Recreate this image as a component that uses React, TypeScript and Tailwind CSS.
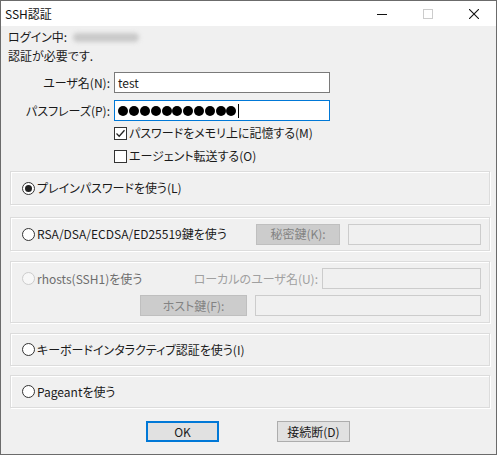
import React from 'react'

const Radio = ({ checked, disabled }: { checked?: boolean; disabled?: boolean }) => (
  <span
    className={`w-[13px] h-[13px] rounded-full border flex items-center justify-center shrink-0 ${
      disabled ? 'border-[#cccccc] bg-[#f7f7f7]' : 'border-[#333333] bg-white'
    }`}
  >
    {checked && <span className="w-[7px] h-[7px] rounded-full bg-[#222222]" />}
  </span>
)

const Check = ({ checked }: { checked?: boolean }) => (
  <span className="w-[13px] h-[13px] border border-[#333333] bg-white flex items-center justify-center shrink-0">
    {checked && (
      <svg width="11" height="11" viewBox="0 0 11 11">
        <path d="M1.5 5.5 L4.2 8.2 L9.5 2.2" fill="none" stroke="#222" strokeWidth="1.3" />
      </svg>
    )}
  </span>
)

const Group = ({ className, children }: { className: string; children: React.ReactNode }) => (
  <div
    className={`ml-[9px] mr-[6px] border border-[#dcdcdc] shadow-[inset_1px_1px_0_#ffffff,1px_1px_0_#ffffff] ${className}`}
  >
    {children}
  </div>
)

const DisabledButton = ({ className, label }: { className: string; label: string }) => (
  <div
    className={`h-[21px] bg-[#cccccc] border border-[#bfbfbf] text-[#838383] flex items-center justify-center shrink-0 ${className}`}
  >
    {label}
  </div>
)

const DisabledInput = ({ className }: { className: string }) => (
  <div className={`h-[21px] bg-[#f0f0f0] border border-[#cccccc] shrink-0 ${className}`} />
)

export default function App() {
  const dots = Array.from({ length: 11 })

  return (
    <div className="w-[497px] h-[455px] bg-[#f0f0f0] border border-[#6b6b6b] flex flex-col overflow-hidden text-[12px] leading-[16px] text-[#1a1a1a] font-['Noto_Sans_CJK_JP',sans-serif] [font-feature-settings:'palt']">
      {/* タイトルバー */}
      <div className="h-[25px] bg-white flex items-center shrink-0">
        <span className="pl-[4px] text-[#111111]">SSH認証</span>
        <div className="ml-auto flex h-full">
          <div className="w-[46px] h-full flex items-center justify-center">
            <svg width="10" height="10" viewBox="0 0 10 10">
              <path d="M0 5.5 H10" stroke="#111" strokeWidth="1" />
            </svg>
          </div>
          <div className="w-[46px] h-full flex items-center justify-center">
            <svg width="10" height="10" viewBox="0 0 10 10">
              <rect x="0.5" y="0.5" width="9" height="9" fill="none" stroke="#cccccc" strokeWidth="1" />
            </svg>
          </div>
          <div className="w-[45px] h-full flex items-center justify-center">
            <svg width="10" height="10" viewBox="0 0 10 10">
              <path d="M0 0 L10 10 M10 0 L0 10" stroke="#111" strokeWidth="1.1" />
            </svg>
          </div>
        </div>
      </div>

      <div className="mt-[3px] pl-[7px] flex items-center h-[16px]">
        <span>ログイン中:</span>
        <span className="ml-[6px] w-[66px] h-[9px] rounded-full bg-[#c9c9c9] blur-[2px]" />
      </div>
      <div className="mt-[3px] pl-[7px] h-[16px]">認証が必要です.</div>

      {/* ユーザ名 */}
      <div className="mt-[8px] flex items-center h-[21px]">
        <span className="w-[109px] text-right">ユーザ名(N):</span>
        <div className="ml-[4px] w-[216px] h-[21px] bg-white border border-[#7a7a7a] flex items-center pl-[3px]">
          test
        </div>
      </div>

      {/* パスフレーズ */}
      <div className="mt-[7px] flex items-center h-[21px]">
        <span className="w-[109px] text-right">パスフレーズ(P):</span>
        <div className="ml-[4px] w-[216px] h-[21px] bg-white border border-[#0078d7] flex items-center pl-[3px]">
          {dots.map((_, i) => (
            <span key={i} className="w-[10.8px] h-[10px] flex justify-center">
              <span className="w-[10px] h-[10px] rounded-full bg-black" />
            </span>
          ))}
          <span className="ml-[1px] w-[1px] h-[14px] bg-black" />
        </div>
      </div>

      <div className="mt-[4px] pl-[113px] flex items-center gap-[2px] h-[16px]">
        <Check checked />
        <span>パスワードをメモリ上に記憶する(M)</span>
      </div>
      <div className="mt-[7px] pl-[113px] flex items-center gap-[2px] h-[16px]">
        <Check />
        <span>エージェント転送する(O)</span>
      </div>

      <Group className="mt-[7px] h-[34px] flex items-center pl-[11px] gap-[2px]">
        <Radio checked />
        <span>プレインパスワードを使う(L)</span>
      </Group>

      <Group className="mt-[12px] h-[34px] flex items-center pl-[11px] pr-[8px]">
        <Radio />
        <span className="ml-[2px]">RSA/DSA/ECDSA/ED25519鍵を使う</span>
        <DisabledButton className="ml-auto w-[84px]" label="秘密鍵(K):" />
        <DisabledInput className="ml-[8px] w-[133px]" />
      </Group>

      <Group className="mt-[10px] h-[62px] pl-[11px] pr-[8px] pt-[6px]">
        <div className="flex items-center h-[21px]">
          <Radio disabled />
          <span className="ml-[2px] text-[#6d6d6d]">rhosts(SSH1)を使う</span>
          <span className="ml-auto text-[#a0a0a0]">ローカルのユーザ名(U):</span>
          <DisabledInput className="ml-[4px] w-[159px]" />
        </div>
        <div className="mt-[6px] flex items-center justify-end h-[21px]">
          <DisabledButton className="w-[107px]" label="ホスト鍵(F):" />
          <DisabledInput className="ml-[8px] w-[226px]" />
        </div>
      </Group>

      <Group className="mt-[10px] h-[33px] flex items-center pl-[11px] gap-[2px]">
        <Radio />
        <span>キーボードインタラクティブ認証を使う(I)</span>
      </Group>

      <Group className="mt-[9px] h-[33px] flex items-center pl-[11px] gap-[2px]">
        <Radio />
        <span>Pageantを使う</span>
      </Group>

      <div className="mt-[13px] flex items-center">
        <div className="ml-[145px] w-[73px] h-[21px] bg-[#e1e1e1] border-2 border-[#0078d7] flex items-center justify-center">
          OK
        </div>
        <div className="ml-[58px] w-[73px] h-[21px] bg-[#e1e1e1] border border-[#adadad] flex items-center justify-center">
          接続断(D)
        </div>
      </div>
    </div>
  )
}
